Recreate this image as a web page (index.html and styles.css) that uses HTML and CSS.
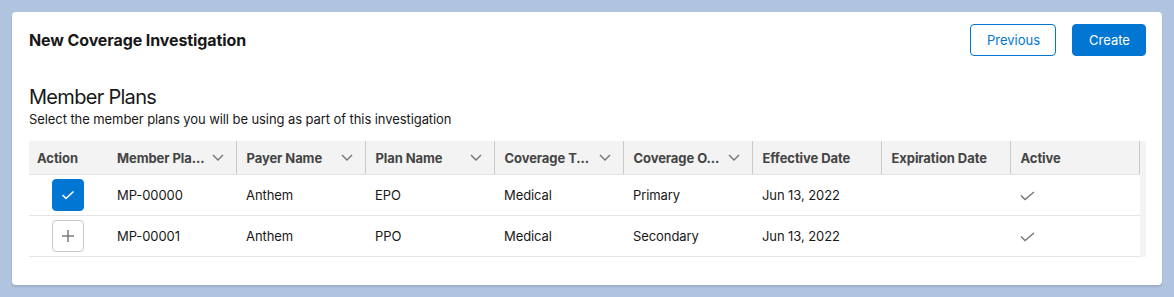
FILE: index.html
```html
<!DOCTYPE html>
<html lang="en">
<head>
    <meta charset="UTF-8">
    <title>New Coverage Investigation</title>
    <link rel="stylesheet" href="styles.css">
</head>
<body>

<div class="card">
    <div class="card-header">
        <h1>New Coverage Investigation</h1>
        <div class="actions">
            <button class="btn btn-neutral">Previous</button>
            <button class="btn btn-brand">Create</button>
        </div>
    </div>

    <h2>Member Plans</h2>
    <p class="subtitle">Select the member plans you will be using as part of this investigation</p>

    <div class="table-wrap">
        <table class="grid">
            <colgroup>
                <col class="col-action">
                <col class="col-std">
                <col class="col-std">
                <col class="col-std">
                <col class="col-std">
                <col class="col-std">
                <col class="col-std">
                <col class="col-std">
                <col>
            </colgroup>
            <thead>
                <tr>
                    <th class="th-action">Action</th>
                    <th title="Member Plan Name"><div class="th-inner"><span class="label">Member Pla...</span><svg class="chev" width="12" height="7" viewBox="0 0 12 7"><polyline points="1,1 6,6 11,1"/></svg></div></th>
                    <th><div class="th-inner"><span class="label">Payer Name</span><svg class="chev" width="12" height="7" viewBox="0 0 12 7"><polyline points="1,1 6,6 11,1"/></svg></div></th>
                    <th><div class="th-inner"><span class="label">Plan Name</span><svg class="chev" width="12" height="7" viewBox="0 0 12 7"><polyline points="1,1 6,6 11,1"/></svg></div></th>
                    <th title="Coverage Type"><div class="th-inner"><span class="label">Coverage T...</span><svg class="chev" width="12" height="7" viewBox="0 0 12 7"><polyline points="1,1 6,6 11,1"/></svg></div></th>
                    <th title="Coverage Order"><div class="th-inner"><span class="label">Coverage O...</span><svg class="chev" width="12" height="7" viewBox="0 0 12 7"><polyline points="1,1 6,6 11,1"/></svg></div></th>
                    <th><div class="th-inner"><span class="label">Effective Date</span></div></th>
                    <th><div class="th-inner"><span class="label">Expiration Date</span></div></th>
                    <th><div class="th-inner"><span class="label">Active</span></div></th>
                </tr>
            </thead>
            <tbody>
                <tr>
                    <td class="td-action">
                        <button class="icon-btn selected">
                            <svg width="14" height="10" viewBox="0 0 14 10"><polyline points="1.5,5 5,8.5 12.5,1.5"/></svg>
                        </button>
                    </td>
                    <td>MP-00000</td>
                    <td>Anthem</td>
                    <td>EPO</td>
                    <td>Medical</td>
                    <td>Primary</td>
                    <td>Jun 13, 2022</td>
                    <td></td>
                    <td><svg class="tick" width="15" height="10" viewBox="0 0 15 10"><polyline points="1,4.5 5,8.5 14,1"/></svg></td>
                </tr>
                <tr>
                    <td class="td-action">
                        <button class="icon-btn">
                            <svg width="14" height="14" viewBox="0 0 14 14"><line x1="7" y1="1" x2="7" y2="13"/><line x1="1" y1="7" x2="13" y2="7"/></svg>
                        </button>
                    </td>
                    <td>MP-00001</td>
                    <td>Anthem</td>
                    <td>PPO</td>
                    <td>Medical</td>
                    <td>Secondary</td>
                    <td>Jun 13, 2022</td>
                    <td></td>
                    <td><svg class="tick" width="15" height="10" viewBox="0 0 15 10"><polyline points="1,4.5 5,8.5 14,1"/></svg></td>
                </tr>
            </tbody>
        </table>
    </div>
</div>

</body>
</html>
```

FILE: styles.css
```css
body {
    margin: 0;
    padding: 12px;
    background-color: #b0c4df;
    font-family: Inter, "Noto Sans", sans-serif;
    color: #181818;
    letter-spacing: -0.08px;
}
.card {
    background: white;
    border-radius: 4px;
    box-shadow: 0 2px 2px rgba(0,0,0,0.12);
    height: 273px;
    box-sizing: border-box;
    padding: 12px 16px 0 17px;
}
.card-header {
    display: flex;
    justify-content: space-between;
    align-items: center;
    height: 32px;
}
.card-header h1 {
    margin: 0;
    font-size: 16px;
    font-weight: 700;
    letter-spacing: -0.1px;
}
.actions {
    display: flex;
    gap: 16px;
}
.btn {
    height: 32px;
    padding: 0 16px;
    border-radius: 4px;
    font-family: inherit;
    font-size: 13px;
    border: 1px solid #0176d3;
    cursor: pointer;
}
.btn-neutral {
    background: white;
    color: #0176d3;
    width: 86px;
}
.btn-brand {
    background: #0176d3;
    color: white;
    width: 74px;
}
h2 {
    margin: 29px 0 0;
    font-size: 20px;
    font-weight: 400;
    line-height: 25px;
    letter-spacing: -0.7px;
}
.subtitle {
    margin: 0;
    font-size: 13px;
    line-height: 18px;
}
.table-wrap {
    margin-top: 13px;
    background: #f3f3f3;
    padding-right: 6px;
}
.grid {
    width: 100%;
    border-collapse: collapse;
    table-layout: fixed;
    font-size: 13px;
}
.col-action {
    width: 78px;
}
.col-std {
    width: 129px;
}
.grid th {
    height: 33px;
    background: #f3f3f3;
    color: #444;
    font-weight: 700;
    text-align: left;
    padding: 0;
    border-bottom: 1px solid #e5e5e5;
    border-right: 1px solid #c9c9c9;
}
.grid th.th-action {
    padding-left: 8px;
    border-right: none;
}
.th-inner {
    display: flex;
    align-items: center;
    padding: 0 12px 0 10px;
    gap: 8px;
}
.th-inner .label {
    flex: 1;
    min-width: 0;
    white-space: nowrap;
}
.chev {
    flex: none;
    fill: none;
    stroke: #747474;
    stroke-width: 1.4;
}
.grid td {
    height: 40px;
    background: white;
    padding: 0 10px;
    border-bottom: 1px solid #e5e5e5;
    white-space: nowrap;
}
.grid td.td-action {
    padding: 0;
    text-align: center;
}
.icon-btn {
    width: 32px;
    height: 32px;
    border-radius: 4px;
    border: 1px solid #c9c9c9;
    background: white;
    display: inline-flex;
    align-items: center;
    justify-content: center;
    padding: 0;
    vertical-align: middle;
}
.icon-btn svg {
    fill: none;
    stroke: #747474;
    stroke-width: 1.4;
}
.icon-btn.selected {
    background: #0176d3;
    border-color: #0176d3;
}
.icon-btn.selected svg {
    stroke: white;
    stroke-width: 1.6;
}
.tick {
    fill: none;
    stroke: #747474;
    stroke-width: 1.3;
    vertical-align: middle;
}
```
